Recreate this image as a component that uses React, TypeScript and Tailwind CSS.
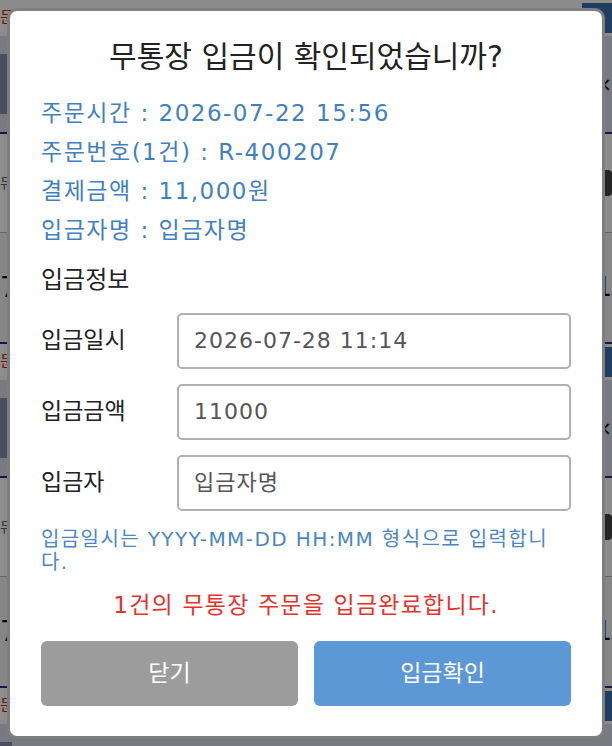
import React from "react";

const FONT = { fontFamily: '"DejaVu Sans", "Noto Sans CJK KR", sans-serif' };

const ORDER_INFO = [
  { label: "주문시간", value: "2026-07-22 15:56" },
  { label: "주문번호(1건)", value: "R-400207" },
  { label: "결제금액", value: "11,000원" },
  { label: "입금자명", value: "입금자명" },
];

const FIELDS = [
  { label: "입금일시", value: "2026-07-28 11:14" },
  { label: "입금금액", value: "11000" },
  { label: "입금자", value: "", placeholder: "입금자명" },
];

// 뒤에 깔린 주문 목록 (모달 가장자리로만 보임)
function OrderCard() {
  return (
    <div className="border-b-2 border-[#2c2c6e] bg-white">
      <div className="flex h-[36px] items-center justify-between">
        <span className="text-[16px] text-[#d2271d]">문</span>
        <span className="h-[30px] w-[30px] bg-[#3b6fb3]" />
      </div>
      <div className="flex h-[96px] items-center justify-between bg-[#dcdcec]">
        <span className="h-[60px] w-[12px] bg-[#8c8cb0]" />
        <span className="text-[20px] text-black">×</span>
      </div>
      <div className="flex h-[100px] items-center justify-between border-t-2 border-[#2c2c6e]">
        <span className="text-[14px] text-[#666]">듀</span>
        <span className="h-[26px] w-[16px] rounded bg-[#444]" />
      </div>
      <div className="flex h-[110px] items-center justify-between border-t border-[#bbb] bg-[#f4f4f4]">
        <span className="text-[28px] text-black">7</span>
        <span className="text-[26px] text-black">1</span>
      </div>
    </div>
  );
}

export default function App() {
  return (
    <div className="relative h-[746px] w-[612px] overflow-hidden bg-white" style={FONT}>
      <div className="flex flex-col">
        {[1, 2, 3].map((i) => (
          <OrderCard key={i} />
        ))}
      </div>

      {/* backdrop */}
      <div className="absolute inset-0 flex items-center justify-center bg-black/45">
        <div className="w-[592px] rounded-[7px] bg-white px-[31px] pb-[30px] pt-[26px] ring-[3px] ring-[#7e7e82]">
          <h2 className="text-center text-[30px] leading-[40px] text-[#222]">
            무통장 입금이 확인되었습니까?
          </h2>

          <div className="mt-[17px] text-[23px] leading-[39px] tracking-[1.5px] text-[#3f80c4]">
            {ORDER_INFO.map((row) => (
              <p key={row.label}>
                {row.label} : {row.value}
              </p>
            ))}
          </div>

          <h3 className="mt-[12px] text-[24px] leading-[36px] text-[#222]">입금정보</h3>

          <div className="mt-[15px] flex flex-col gap-[15px]">
            {FIELDS.map((f) => (
              <div key={f.label} className="flex items-center">
                <span className="w-[136px] shrink-0 text-[23px] text-[#222]">{f.label}</span>
                <input
                  readOnly
                  value={f.value}
                  placeholder={f.placeholder}
                  className="h-[56px] w-full rounded-[5px] border-2 border-[#b0b0b0] px-[15px] text-[22px] tracking-[1px] text-[#555] outline-none placeholder:text-[#555]"
                  style={FONT}
                />
              </div>
            ))}
          </div>

          <p className="mt-[17px] text-[20px] leading-[23px] tracking-[1.4px] text-[#4a86c6]">
            입금일시는 YYYY-MM-DD HH:MM 형식으로 입력합니다.
          </p>

          <p className="mt-[16px] text-center text-[23px] leading-[30px] tracking-[1.2px] text-[#e5322a]">
            1건의 무통장 주문을 입금완료합니다.
          </p>

          <div className="mt-[21px] grid grid-cols-2 gap-[16px]">
            <button className="h-[65px] rounded-[6px] bg-[#9c9c9c] text-[23px] text-white" style={FONT}>
              닫기
            </button>
            <button className="h-[65px] rounded-[6px] bg-[#5b98d5] text-[23px] text-white" style={FONT}>
              입금확인
            </button>
          </div>
        </div>
      </div>
    </div>
  );
}
